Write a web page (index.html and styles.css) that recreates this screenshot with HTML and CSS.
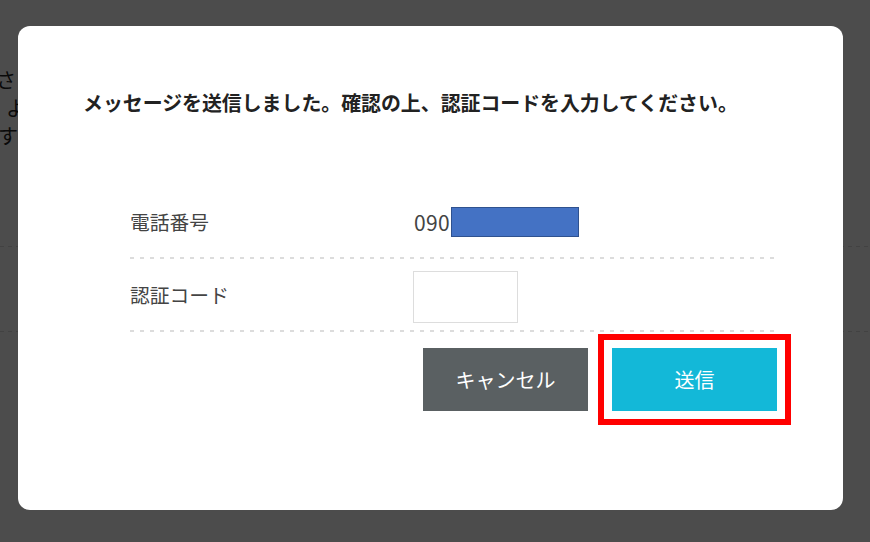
FILE: index.html
```html
<!DOCTYPE html>
<html lang="ja">
<head>
<meta charset="utf-8">
<title>認証コード</title>
<link rel="stylesheet" href="styles.css">
</head>
<body>
<div class="page">
  <div class="page-text">
    <p class="line l1">さ</p>
    <p class="line l2">よ</p>
    <p class="line l3">す</p>
  </div>
  <div class="page-rule r1"></div>
  <div class="page-rule r2"></div>
</div>

<div class="overlay">
  <div class="modal">
    <p class="lead">メッセージを送信しました。確認の上、認証コードを入力してください。</p>
    <form class="auth" onsubmit="return false;">
      <div class="row">
        <div class="label">電話番号</div>
        <div class="value">090<span class="mask"></span></div>
      </div>
      <div class="sep"></div>
      <div class="row">
        <div class="label">認証コード</div>
        <div class="value"><input type="text" class="code" maxlength="6"></div>
      </div>
      <div class="sep"></div>
      <div class="buttons">
        <button type="button" class="btn cancel">キャンセル</button>
        <button type="submit" class="btn send">送信</button>
      </div>
    </form>
  </div>
</div>
</body>
</html>
```

FILE: styles.css
```css
html, body {margin: 0; padding: 0; background: #ffffff;}
body {font-family: "Noto Sans CJK JP", "Liberation Sans", sans-serif; color: #333333; width: 870px; height: 542px; overflow: hidden;}

/* page behind the dialog */
.page {padding-top: 66px;}
.page-text {height: 84px;}
.line {margin: 0; font-size: 20px; line-height: 28px; color: #222222;}
.l1 {text-indent: -4px;}
.l2 {text-indent: 6px;}
.l3 {text-indent: -2px;}
.page-rule {height: 1px; background-image: linear-gradient(to right, #dddddd 4px, transparent 4px); background-size: 8px 1px;}
.r1 {margin-top: 96px;}
.r2 {margin-top: 84px;}

/* dialog */
.overlay {position: fixed; top: 0; left: 0; right: 0; bottom: 0; background: rgba(0, 0, 0, 0.7);}
.modal {box-sizing: border-box; width: 825px; height: 484px; margin: 26px 0 0 18px; padding: 62px 68px 0 65px; background: #ffffff; border-radius: 12px;}
.lead {margin: 0; font-size: 19.9px; line-height: 30px; font-weight: bold; color: #222222; white-space: nowrap;}

.auth {margin: 68px 0 0 47px;}
.row {display: flex; align-items: center; height: 71px;}
.label {width: 284px; font-size: 19.8px; color: #444444;}
.value {display: flex; align-items: center; font-size: 21px; color: #444444; letter-spacing: 0.3px;}
.mask {display: inline-block; box-sizing: border-box; width: 128px; height: 30px; margin-left: 1px; background: #4472c4; border: 1px solid #2f528f;}
.code {box-sizing: border-box; width: 105px; height: 52px; margin: 4px 0 0 -1px; border: 1px solid #dddddd; border-radius: 0; outline: none; font-size: 18px; padding: 0 8px;}
.sep {height: 2px; background-image: linear-gradient(to right, #dcdcdc 4px, transparent 4px); background-size: 10px 2px;}

.buttons {display: flex; justify-content: flex-end; gap: 24px; margin: 16px -2px 0 0;}
.btn {width: 165px; height: 63px; border: none; border-radius: 0; color: #ffffff; font-family: "Noto Sans CJK JP", sans-serif; font-size: 20px; cursor: pointer;}
.cancel {background: #5a6062;}
.send {background: #13b8d8; outline: 6px solid #ff0000; outline-offset: 8px;}
```
